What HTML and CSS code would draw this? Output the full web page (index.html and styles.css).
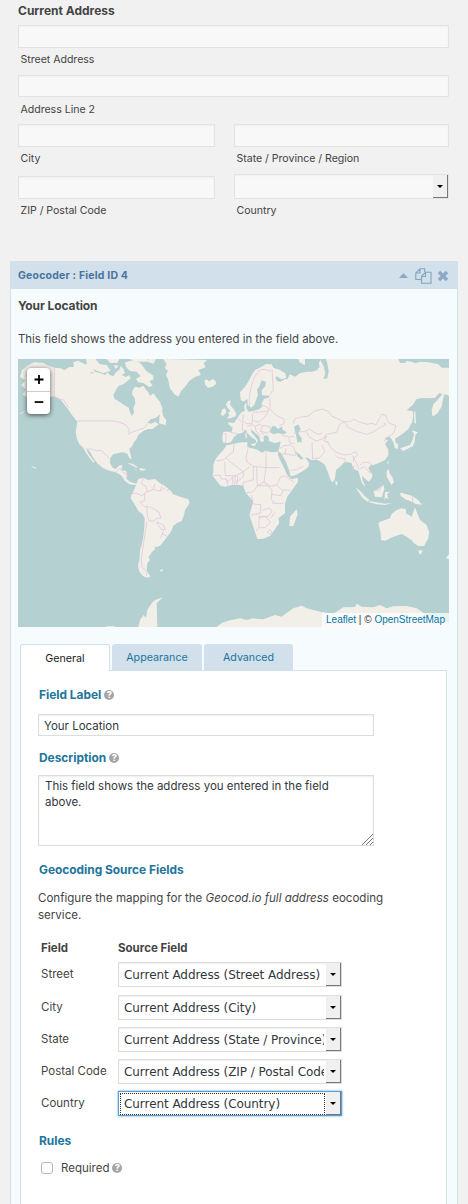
FILE: index.html
```html
<!DOCTYPE html>
<html lang="en">
<head>
<meta charset="utf-8">
<title>Form editor</title>
<link rel="stylesheet" href="styles.css">
</head>
<body>
<section class="address">
  <h3 class="title">Current Address</h3>
  <div class="grid">
    <div class="cell wide"><div class="box"></div><span class="sub">Street Address</span></div>
    <div class="cell wide second"><div class="box short"></div><span class="sub">Address Line 2</span></div>
    <div class="cell"><div class="box"></div><span class="sub">City</span></div>
    <div class="cell"><div class="box"></div><span class="sub">State / Province / Region</span></div>
    <div class="cell low"><div class="box"></div><span class="sub">ZIP / Postal Code</span></div>
    <div class="cell"><div class="box select"><i class="arrow"></i></div><span class="sub">Country</span></div>
  </div>
</section>

<section class="panel">
  <header class="bar">
    <span class="bar-title">Geocoder : Field ID 4</span>
    <svg class="caret" width="9" height="5" viewBox="0 0 9 5"><path d="M0 5L4.5 0 9 5z"/></svg>
    <svg class="copy" width="17" height="16" viewBox="0 0 17 16"><path d="M6.500 11.500H.8V5L5 .8h4.700v3.400M5 1v4H1M10.500 4.300L6.500 8.300v6.900h9.500V4.300zM10.500 4.500v4H6.700"/></svg>
    <svg class="close" width="12" height="12" viewBox="0 0 12 12"><path d="M2 2l8 8M10 2L2 10"/></svg>
  </header>
  <div class="body">
    <h3 class="title">Your Location</h3>
    <p class="intro">This field shows the address you entered in the field above.</p>
    <div class="map">
      <svg class="world" width="431" height="268" viewBox="24 12 1293 804">
        <g class="land">
          <path d="M36 45L52 32 72 22 100 24 112 30 133 38 152 40 163 46 178 36 195 36 208 44 225 45 245 56 255 50 270 54 285 60 292 52 300 60 310 64 318 52 328 44 332 32 342 44 345 54 335 60 348 66 358 60 362 70 350 80 340 88 325 94 318 105 310 120 314 132 328 140 342 150 356 158 360 172 366 184 372 172 370 158 376 145 374 130 366 118 368 105 376 95 388 98 400 92 408 104 415 112 420 122 430 115 440 128 450 140 458 162 450 178 438 188 422 193 412 203 424 206 436 200 446 208 428 222 415 222 400 228 385 240 380 252 372 262 365 275 358 282 362 300 365 312 358 310 352 296 340 292 325 294 310 298 301 308 300 325 308 338 318 342 326 332 338 330 334 345 348 348 352 362 350 372 360 380 372 384 384 388 376 390 358 388 345 378 335 362 318 352 300 348 280 340 262 325 250 308 238 288 229 281 234 294 245 310 254 320 250 323 238 308 226 290 220 278 208 268 200 250 197 230 200 212 202 200 190 185 180 172 172 160 160 145 150 132 133 124 110 128 80 150 50 168 70 140 38 118 48 104 34 90 46 76 30 66z"/>
          <path d="M190 22l14-5 20 10 14 3 18 20-20 4-26-6-18-12z M228 12h28l14 16 20 2 12 17-22 8-30-12-20-16z M290 12h38l-6 12-22 0z M345 22l30-8 18 12 16 22 21 14 0 12-12 4 10 14-10 4-18-12-15-2-8-10 15-8-12-14-20-2-12-12z M358 12h52l12 8-34 0z M415 12h22l-6 14-14-4z M310 30l16 2-8 10z M380 100l10 2-4 10-8-4z"/>
          <path d="M451 165l6 4 2 14 10 12-2 15-8-2-12-3 2-24z M460 12l10 16-6 10 10 10-6 12 7 16 4 22 14 20 12 7 8-16 14-16 10-14 16-12 20-8-8-14 22-8-6-12 10-10z"/>
          <path d="M583 78l6-5 9 6 10-7 9 6 1 9-10 8-14 3-8-8z M653 139l9-3-2 13 9 11 9 14-1 10-12 4-14 3 7-10-4-8 7-5-8-10-5-9z M636 164l9-5 4 12-8 11-9-2z"/>
          <path d="M692 135L690 112 705 95 715 80 725 60 735 45 750 38 768 27 785 28 790 38 810 45 826 55 829 68 815 73 800 64 796 68 801 78 812 80 825 72 833 72 839 58 855 65 870 55 890 50 905 50 922 46 928 20 933 12H1165L1170 24 1185 24 1190 18 1205 20 1215 25 1230 20 1255 22 1285 28 1295 38 1317 38V122L1304 117 1300 128 1295 155 1282 175 1270 184 1267 182 1265 165 1270 148 1285 132 1297 118 1288 114 1275 128 1260 130 1235 129 1220 132 1208 150 1190 165 1200 168 1208 168 1210 182 1207 200 1195 222 1180 235 1167 244 1155 252 1157 262 1165 270 1164 281 1155 280 1152 268 1148 258 1143 250 1135 244 1123 252 1134 256 1125 266 1135 285 1135 300 1125 315 1105 325 1090 330 1083 330 1074 336 1078 346 1088 360 1085 370 1076 380 1064 370 1057 362 1057 375 1065 390 1063 394 1055 382 1050 365 1045 348 1037 345 1030 340 1025 325 1015 322 1003 322 990 335 978 345 975 370 969 382 963 378 953 350 945 330 935 322 920 314 905 316 893 308 878 308 868 298 855 288 864 305 874 314 884 306 898 324 895 336 880 347 858 360 842 364 837 345 828 320 813 295 806 288 803 298 815 325 825 345 833 362 845 373 864 368 864 380 850 400 832 425 825 445 825 475 805 490 808 503 795 523 780 543 760 551 742 552 735 530 725 500 718 480 730 440 718 425 708 415 702 400 700 392 685 390 665 390 645 395 632 392 620 378 608 362 610 350 610 330 615 315 628 298 640 285 650 270 660 264 650 265 638 262 637 245 640 230 665 230 668 218 655 208 655 202 672 204 682 190 688 180 695 172 705 168 702 155 706 145 713 150 712 132 700 140z"/>
          <path d="M1037 397l13 10 14 16 14 12-4 6-16-12-14-20z M1077 438l22 4 26 4 20-2-20 6-26-2-20-6z M1090 408l14-5 16-14 3 14-8 24-20-2z M1125 412l16-2-10 6 4 16-8-4-4 8z M1170 413l18 4 20 6 16 12 12 14-18-2-16-8-16-6-14-10z M1130 348l7-6 1 12 10 14 4 14-8 8-6-12-8-12z M1170 280l18-6 12-4 8-16 4-16-6-12 18 6-8 8-2 20-6 14-16 8-12 6z M1212 168l4 2 2 36-5-2z M1132 322l4-6-1 14z M1072 330l9 1-4 7-6-2z M977 376l6 8-2 8-5-6z"/>
          <path d="M1105 505L1110 500 1140 490 1145 477 1160 465 1175 460 1188 463 1188 475 1205 485 1212 465 1215 457 1222 475 1230 495 1250 510 1257 530 1255 550 1242 573 1225 573 1210 563 1205 555 1200 553 1190 545 1175 537 1150 545 1125 557 1113 555 1112 535z M1225 585l13 2-6 12-5-4z M1308 610l9-13v16z M838 513l2-28 20-22 3 14-13 36z M865 12h20l10 8-12 10-14-8z"/>
          <path d="M385 372L400 368 415 375 435 372 450 385 465 393 480 405 490 418 510 425 535 433 539 443 532 455 525 465 522 480 515 498 500 505 490 512 484 528 472 545 460 560 450 572 440 576 432 575 436 582 425 592 422 598 415 605 420 615 412 625 410 640 412 650 422 665 410 668 398 662 388 650 384 630 388 615 390 585 395 570 400 545 403 515 404 490 398 478 385 468 375 450 362 430 364 420 372 405 378 390z"/>
          <path d="M350 324l18 2 18 12-10-1-14-8z M390 339l18 4-8 4-12-2z M374 343l8 2-8 1z M450 645l10-2-2 5-8 1z M62 333l14 4 4 5-8-2z M28 176l20-10-14 10z"/>
          <path d="M385 816L390 795 400 780 408 788 412 765 425 745 435 735 458 727 440 745 442 816z M620 816L636 803 660 796 690 790 710 795 730 790 760 793 795 780 815 785 835 770 850 760 875 752 890 760 930 770 970 776 1000 757 1035 756 1040 746 1055 755 1090 757 1110 750 1130 760 1150 754 1190 753 1220 760 1250 780 1280 790 1317 805V816z M290 814h25v2h-25z"/>
        </g>
        <g class="sea">
          <path d="M755 76L768 80 765 95 755 105 756 121 778 122 778 127 762 132 755 145 757 156 748 162 730 168 716 170 709 160 710 148 724 158 734 148 738 135 744 120 741 105 748 94z"/>
          <path d="M648 267L664 260 672 246 684 236 696 234 706 226 714 236 724 246 738 256 738 264 724 268 734 274 744 256 734 244 724 232 722 222 736 234 748 244 752 262 762 258 760 246 768 240 776 246 776 258 794 264 812 260 808 280 803 290 785 292 766 287 756 293 742 284 724 280 712 276 712 262 694 262 672 266 650 271z"/>
          <path d="M780 232l6-18 10 0 8 8 12-8 2 10 12 8-8 6-20-4-10 4z M852 215L865 208 872 222 865 235 875 250 875 262 862 262 858 240z M930 12h18l4 14 4 22-4 22-12 2 6-16-4-20z M885 12h38l6 24-10 8-16-14-18 0z"/>
        </g>
        <path class="isle" d="M706 236l3-6 2 16-4 6z M722 266l10 2-4 5z"/>
        <g class="border">
          <path d="M133 38V124L150 134 160 134 176 158M202 198H308L330 202 348 210 358 224 356 238 370 230 388 224 404 218 412 206M228 282H246L258 288 272 286 286 298 298 310M318 350l12-10 8 12 12 6 0 14"/>
          <path d="M400 368l-6 18 14 8 4 16-16 12-18-8-12 2M412 410l18-6 4-18M430 404l20 4 6-14M450 408l16-10M468 408l12-6M404 416l0 20-14 6 14 14 6-2 14 4 24 14 4 18-12 0-8 8-14 0-6-14-2-30M410 500l-4 30-6 40-6 40 2 28 14 10 0 14M438 500l22 10 6 14-12 0-14-22M460 528l-8 20M456 535l16 10"/>
          <path d="M718 155l0-28 5-30 10-30 14-20 8-3 10-1 14 6 4-8M786 44l4 60-10 14M780 130v30l10 14 14 10 18 8 0 14-14 6M755 150l16 6 6 8-12 6-36 2M778 164l-8 14-12 14M700 178l-2 20 12 8 16 0 2-30M684 190l14 14-2 20 16 4M728 196l18 6 12-10M726 208l10 6 12-6 10 4 20 2 4 14M712 214l14-4M736 214l2 14 12 12M758 212l-6 14 8 14M750 228l22 6 8-6M641 236l8 2-3 26M660 232l22 4"/>
          <path d="M850 206l4-14 18-6 20-2 12-8 10-8 24-6 18 8 10 14 24 10 12 6 20 0 8-8 20 10 22 6 14-4 12 6 8-16 10-16 10 2 10 24 22 8-6 20-16 14-14 12M1002 200l14 18 26 12 28 8 18-6 20-14 18-8-6-10M1002 200l-14 10-8 22-28 6-10 8M850 236l16-6 18 0 14-8 14 10 14 6 10-4M890 232l8 14 20 12 24-8 8-6-8 14 16 4M906 262l2 50 22-4 14-18-8-20M950 260l14 18 10 12 28 10 20-2 14-8 8 10-14 10 0 12M976 300l8 8 20 4 4 14M1028 302l14 28 6 14M1050 330l10-8 18 0 10 12M1050 342l12-8 14 16 10 6M1036 330l-10 14 4 6M1092 408l16-2 8-14M1154 262l8-3"/>
          <path d="M620 318l22-4 6-6 22-18 2-22M648 308l14 14 38 28-22 12-32 0-2-42M714 280l-6 28 4 14 18 12 38 4 0-48M768 338h40M768 338l-6 44-20 10-2-58M700 350l18-14M700 350l0 16-22 16M730 334l0 40-30 8M610 362l20-2 4 12 14 0 6 8 14-14 10-2M648 372l6 20M668 366l0 24M676 364l-2 26M684 364l-4 26M700 382l-2 12M762 382l20 12 18-4 12-24 12-4 28 20M806 294l4 20M810 280l12-8 20-2 10 8 6 24M810 300l16-6 2-14M822 296l34 6M840 346l20-2 20-10M800 390l14 14 26 2M708 414l22-4 12-18 30 0 14 12-2 30 10 10M718 440l14 7 20 2 0 24-30 8M758 465l20-6 8 10-12 16-28-2M748 482l-2 36-8 10M748 490l16-6 18 16-16 18-18 0M782 490l14-18M772 530l8-6 6 8-8 6zM786 444l30 2 6-4M784 418l28 4 8-16M724 420l4 20M1208 424v22M815 240l20 6 18-2M836 248l4 16 14 2"/>
        </g>
      </svg>
      <div class="zoom">
        <svg width="23" height="23" viewBox="0 0 23 23"><path d="M7.500 11.500h9M12 7v9"/></svg>
        <svg width="23" height="23" viewBox="0 0 23 23"><path d="M7.500 10.500h9"/></svg>
      </div>
      <div class="credit"><a>Leaflet</a> | © <a>OpenStreetMap</a></div>
    </div>

    <nav class="tabs"><span class="tab on">General</span><span class="tab">Appearance</span><span class="tab last">Advanced</span></nav>
    <div class="settings">
      <h4 class="label">Field Label <i class="help">?</i></h4>
      <div class="input">Your Location</div>
      <h4 class="label desc">Description <i class="help">?</i></h4>
      <div class="input area">This field shows the address you entered in the field above.
        <svg class="grip" width="11" height="11" viewBox="0 0 11 11"><path d="M0 11L11 0M4 11l7-7M8 11l3-3"/></svg>
      </div>
      <h4 class="label geo">Geocoding Source Fields</h4>
      <p class="help-text">Configure the mapping for the <em>Geocod.io full address</em> eocoding service.</p>
      <div class="mapping">
        <b>Field</b><b>Source Field</b>
        <span>Street</span><div class="drop"><span class="val">Current Address (Street Address)</span><i class="arrow"></i></div>
        <span>City</span><div class="drop"><span class="val">Current Address (City)</span><i class="arrow"></i></div>
        <span>State</span><div class="drop"><span class="val">Current Address (State / Province)</span><i class="arrow"></i></div>
        <span>Postal Code</span><div class="drop"><span class="val">Current Address (ZIP / Postal Code)</span><i class="arrow"></i></div>
        <span>Country</span><div class="drop focus"><span class="val">Current Address (Country)</span><i class="arrow"></i></div>
      </div>
      <h4 class="label rules">Rules</h4>
      <div class="check"><i class="tick"></i>Required <i class="help">?</i></div>
    </div>
  </div>
</section>
</body>
</html>
```

FILE: styles.css
```css
* { box-sizing: border-box; }
html, body { height: 1204px; overflow: hidden; }
body { margin: 0; background: #f1f1f1; color: #444; font: 12px/16px Inter, sans-serif; }
h3, h4, p { margin: 0; }
i { font-style: normal; }

.address { height: 261px; padding: 3px 19px 0 18px; }
.title { font-size: 12px; line-height: 16px; font-weight: 700; color: #444; }
.body .title { letter-spacing: -.1px; }
.grid { display: grid; grid-template-columns: 197px 215px; column-gap: 19px; grid-template-rows: 50px 49px 50px 52px; padding-top: 6px; align-items: start; }
.wide { grid-column: 1 / 3; }
.low { padding-top: 2px; }
.low .sub { margin-top: 3px; }
.box { height: 23px; background: #f8f8f8; border: 1px solid #e3e3e3; box-shadow: inset 0 1px 2px rgba(0,0,0,.04); }
.box.short { height: 22px; }
.box.select { height: 25px; display: flex; justify-content: flex-end; }
.sub { display: block; margin-top: 3px; padding-left: 2.5px; font-size: 10.600px; line-height: 17px; letter-spacing: -.03px; }
.second .sub { margin-top: 4px; }

.arrow { flex: none; width: 15px; background: #f0f0f0; border-right: 1px solid #777; border-bottom: 1px solid #777; display: flex; align-items: center; justify-content: center; }
.arrow::before { content: ""; border: 3px solid transparent; border-top-color: #000; border-bottom: 0; }

.panel { width: 448px; height: 943px; margin-left: 10px; background: #f6fbfe; border: solid #d2e0eb; border-width: 0 1px; }
.bar { height: 28px; margin: 0 -1px; padding: 0 9px 0 8px; background: #d2e0eb; display: flex; align-items: center; }
.bar-title { flex: 1; padding-top: 1px; color: #48749e; font-size: 10.500px; font-weight: 700; letter-spacing: .19px; }
.caret { fill: #8ca9c4; margin: 1px 7px 0 0; }
.copy { fill: none; stroke: #7fa5bf; stroke-width: 1.100; margin: 1px 5px 0 0; }
.close { fill: none; stroke: #8ca9c4; stroke-width: 3.300; margin-top: 1px; }
.body { padding: 9px 7px 0; }
.intro { margin: 17px 0 12px; font-size: 11.400px; line-height: 16px; }

.map { position: relative; width: 431px; height: 268px; background: #b5d0d0; overflow: hidden; }
.world { display: block; }
.land, .isle { fill: #f2efe9; }
.sea { fill: #b5d0d0; }
.border { fill: none; stroke: #e0c3dc; stroke-width: 2.200; stroke-linejoin: round; }
.zoom { position: absolute; left: 9px; top: 9px; width: 23px; height: 46px; display: flex; flex-direction: column; background: #fff; border-radius: 4px; box-shadow: 0 1px 5px rgba(0,0,0,.65); }
.zoom svg { stroke: #000; stroke-width: 1.800; }
.zoom svg + svg { border-top: 1px solid #ccc; }
.credit { position: absolute; right: 0; bottom: 0; height: 14px; padding: 0 4px; background: rgba(255,255,255,.7); color: #333; font: 10px/14px "Liberation Sans", Arial, sans-serif; white-space: nowrap; }
.credit a { color: #0078a8; }

.tabs { display: flex; gap: 2px; margin: 17px 0 0 2px; height: 27px; position: relative; z-index: 1; }
.tab { width: 90px; height: 26px; text-align: center; font-size: 10.700px; line-height: 28px; background: #d2e0eb; color: #21759b; border-radius: 3px 3px 0 0; }
.tab.on { height: 27px; background: #fff; border: 1px solid #d2e0eb; border-bottom: 0; color: #222; line-height: 27px; }
.tab.last { width: 89px; }
.settings { width: 427px; height: 535px; margin: -1px 0 0 2px; background: #fff; border: 1px solid #d2e0eb; padding: 15px 17px 0; }
.label { color: #21759b; font-size: 11.900px; line-height: 18px; font-weight: 700; padding-left: 1px; display: flex; align-items: center; gap: 3px; }
.help { display: inline-flex; width: 10px; height: 10px; border-radius: 50%; background: #a5a5a5; color: #fff; font-size: 9px; line-height: 10px; font-weight: 800; justify-content: center; align-items: center; }
.input { width: 336px; height: 22px; margin-top: 10px; padding: 3px 5px; border: 1px solid #ddd; font-size: 11.500px; line-height: 16px; color: #32373c; box-shadow: inset 0 1px 2px rgba(0,0,0,.07); }
.desc { margin-top: 13px; }
.area { position: relative; height: 71px; margin-top: 8px; padding: 2px 30px 0 6px; }
.grip { position: absolute; right: 0; bottom: 0; stroke: #777; fill: none; }
.geo { margin-top: 15px; }
.help-text { margin: 11px 0 0; width: 370px; font-size: 11.550px; line-height: 17px; }
.mapping { display: grid; grid-template-columns: 77px 224px; grid-template-rows: 22px 33px 32px 32px 32px 25px; margin: 16px 0 0 3px; align-items: start; font-size: 11.500px; }
.mapping > span { padding-top: 3.500px; }
.drop { height: 25px; border: 1px solid #ddd; display: flex; box-shadow: inset 0 1px 2px rgba(0,0,0,.07); }
.val { flex: 1; min-width: 0; overflow: hidden; white-space: nowrap; margin: 2px 2px 1px; padding-left: 3px; font: 12px/20px "DejaVu Sans", sans-serif; color: #32373c; letter-spacing: -.06px; }
.focus { border-color: #5b9dd9; box-shadow: 0 0 2px rgba(30,140,190,.8); }
.focus .val { outline: 1px dotted #333; }
.rules { margin-top: 16px; }
.check { display: flex; align-items: center; gap: 3px; margin: 10px 0 0 3px; font-size: 11.500px; }
.tick { width: 12px; height: 12px; margin-right: 5px; border: 1px solid #b4b9be; border-radius: 3px; background: #fff; }
```
